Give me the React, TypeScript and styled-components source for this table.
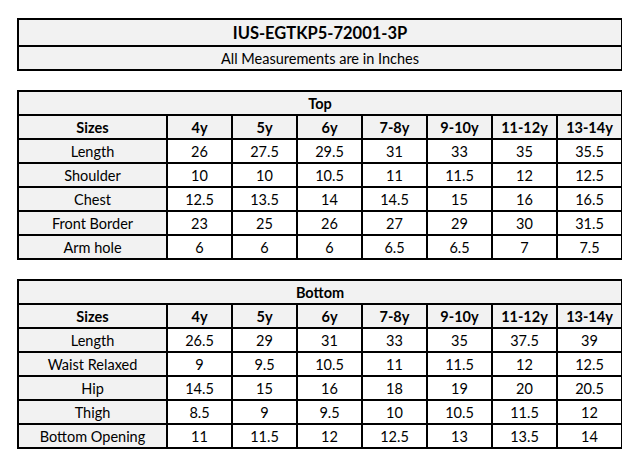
import React from 'react';
import styled, { createGlobalStyle } from 'styled-components';

const GlobalStyle = createGlobalStyle`
  html, body {
    margin: 0;
    padding: 0;
    background: #ffffff;
  }
  body {
    font-family: Lato, "Open Sans", "Liberation Sans", sans-serif;
    color: #000;
  }
`;

const sizes = ['4y', '5y', '6y', '7-8y', '9-10y', '11-12y', '13-14y'];

const topRows: [string, string[]][] = [
  ['Length', ['26', '27.5', '29.5', '31', '33', '35', '35.5']],
  ['Shoulder', ['10', '10', '10.5', '11', '11.5', '12', '12.5']],
  ['Chest', ['12.5', '13.5', '14', '14.5', '15', '16', '16.5']],
  ['Front Border', ['23', '25', '26', '27', '29', '30', '31.5']],
  ['Arm hole', ['6', '6', '6', '6.5', '6.5', '7', '7.5']],
];

const bottomRows: [string, string[]][] = [
  ['Length', ['26.5', '29', '31', '33', '35', '37.5', '39']],
  ['Waist Relaxed', ['9', '9.5', '10.5', '11', '11.5', '12', '12.5']],
  ['Hip', ['14.5', '15', '16', '18', '19', '20', '20.5']],
  ['Thigh', ['8.5', '9', '9.5', '10', '10.5', '11.5', '12']],
  ['Bottom Opening', ['11', '11.5', '12', '12.5', '13', '13.5', '14']],
];

const Page = styled.div`
  padding: 18px 0 0 17px;
  display: flex;
  flex-direction: column;
  gap: 19px;
`;

const Sheet = styled.div`
  width: 605px;
  box-sizing: border-box;
  display: grid;
  grid-template-columns: 147px repeat(7, 63px);
  grid-auto-rows: 22px;
  gap: 2px;
  padding: 2px;
  background: #000;
`;

const Cell = styled.div<{ $shade?: boolean; $bold?: boolean; $span?: boolean; $tall?: boolean }>`
  grid-column: ${(p) => (p.$span ? '1 / -1' : 'auto')};
  ${(p) => (p.$tall ? 'height: 25px;' : '')}
  background: ${(p) => (p.$shade ? '#f2f2f2' : '#ffffff')};
  font-weight: ${(p) => (p.$bold ? 700 : 400)};
  font-size: 14.5px;
  display: flex;
  align-items: center;
  justify-content: center;
  padding-top: 1px;
  box-sizing: border-box;
  white-space: nowrap;
`;

const HeaderSheet = styled(Sheet)`
  grid-auto-rows: auto;
`;

const Title = styled(Cell)`
  font-size: 16.5px;
  height: 25px;
`;

const Note = styled(Cell)`
  height: 22px;
`;

function SizeTable({ name, rows }: { name: string; rows: [string, string[]][] }) {
  return (
    <Sheet>
      <Cell $span $shade $bold>{name}</Cell>
      <Cell $shade $bold>Sizes</Cell>
      {sizes.map((s) => (
        <Cell key={s} $shade $bold>{s}</Cell>
      ))}
      {rows.map(([label, values]) => (
        <React.Fragment key={label}>
          <Cell $shade>{label}</Cell>
          {values.map((v, i) => (
            <Cell key={i}>{v}</Cell>
          ))}
        </React.Fragment>
      ))}
    </Sheet>
  );
}

export default function App() {
  return (
    <>
      <GlobalStyle />
      <Page>
        <HeaderSheet>
          <Title $span $shade $bold>IUS-EGTKP5-72001-3P</Title>
          <Note $span $shade>All Measurements are in Inches</Note>
        </HeaderSheet>
        <SizeTable name="Top" rows={topRows} />
        <SizeTable name="Bottom" rows={bottomRows} />
      </Page>
    </>
  );
}
